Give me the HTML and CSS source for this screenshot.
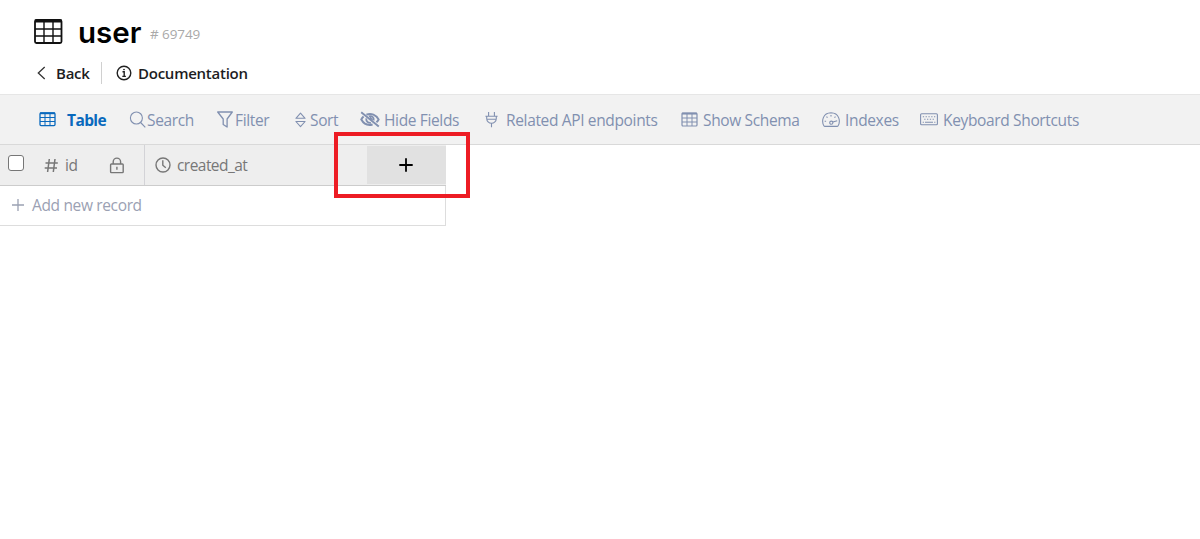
FILE: index.html
```html
<!DOCTYPE html>
<html lang="en">
<head>
    <meta charset="UTF-8">
    <meta name="viewport" content="width=device-width, initial-scale=1.0">
    <title>user</title>
    <link rel="stylesheet" href="styles.css">
</head>
<body>

    <header class="header">
        <div class="title-row">
            <svg class="title-icon" width="30" height="27" viewBox="0 0 30 27" fill="none" stroke="#111">
                <rect x="2" y="2" width="26.5" height="23" rx="1.5" stroke-width="1.8"/>
                <path d="M2 3h26.5" stroke-width="3"/>
                <path d="M2 11h26M2 18h26M11 4v21M20 4v21" stroke-width="1.4"/>
            </svg>
            <h1>user</h1>
            <span class="table-id"># 69749</span>
        </div>
        <nav class="links">
            <a href="#" class="back">
                <svg width="10" height="14" viewBox="0 0 10 14" fill="none" stroke="#333" stroke-width="1.3"><path d="M8.7 1L2.3 7l6.4 6"/></svg>
                <span>Back</span>
            </a>
            <a href="#" class="docs">
                <svg width="16" height="16" viewBox="0 0 16 16" fill="none" stroke="#222" stroke-width="1.4">
                    <circle cx="8" cy="8" r="6.8"/>
                    <path d="M6.5 6.8h1.7v4.6M6.3 11.4h3.6"/>
                    <circle cx="8" cy="4.6" r=".5" fill="#222" stroke-width=".8"/>
                </svg>
                <span>Documentation</span>
            </a>
        </nav>
    </header>

    <div class="toolbar">
        <button class="tool tool-table active">
            <svg width="17" height="15" viewBox="0 0 17 15" fill="none" stroke="currentColor">
                <rect x="1" y="1" width="15" height="12.6" rx="1" stroke-width="1.3"/>
                <path d="M1 1.3h15" stroke-width="1.8"/>
                <path d="M1 5.5h15M1 9.5h15M6 2v12M11 2v12"/>
            </svg>
            <span>Table</span>
        </button>
        <button class="tool tool-search">
            <svg width="17" height="17" viewBox="0 0 17 17" fill="none" stroke="currentColor" stroke-width="1.1"><circle cx="7.4" cy="7" r="6"/><path d="M11.6 11.5l4.7 4.9"/></svg>
            <span>Search</span>
        </button>
        <button class="tool tool-filter">
            <svg width="17" height="17" viewBox="0 0 17 17" fill="none" stroke="currentColor" stroke-width="1.3" stroke-linejoin="round"><path d="M.7 1h14.6l-5.2 7v8L6.2 13.5V8z"/></svg>
            <span>Filter</span>
        </button>
        <button class="tool tool-sort">
            <svg width="11" height="16" viewBox="0 0 11 16" fill="none" stroke="currentColor" stroke-width="1.1" stroke-linejoin="round"><path d="M5.5 1.2l4.6 5.1H.9zM.9 9.5h9.2l-4.6 5.1z"/></svg>
            <span>Sort</span>
        </button>
        <button class="tool tool-hide">
            <svg width="20" height="17" viewBox="0 0 20 17" fill="none" stroke="currentColor">
                <path d="M1.2 1.2l17.6 14.4" stroke-width="1.9"/>
                <path d="M6.4 3.6C11.2 1.7 16.2 3.8 18.6 8.4c-.6 1.1-1.3 2-2.2 2.8M3.6 5.6C2.7 6.4 1.9 7.3 1.3 8.5 3.8 13 8.2 14.7 12.6 13.5" stroke-width="2"/>
                <path d="M8.8 5.4c2.8-1.2 5.7 1.1 4.9 4.1M6.2 7.4c-.2 2.8 1.8 4.8 4.7 4.4" stroke-width="1.8"/>
                <path d="M10.6 5.8v1.8l2.2 1" stroke-width="1.6"/>
            </svg>
            <span>Hide Fields</span>
        </button>
        <button class="tool tool-api">
            <svg width="13" height="17" viewBox="0 0 13 17" fill="none" stroke="currentColor" stroke-width="1.1"><path d="M3.6 1v4M9.4 1v4M.4 5.3h12.2M1.7 5.5v2a4.8 4.8 0 0 0 9.6 0v-2M2 8.2h9M6.5 12.3v4"/></svg>
            <span>Related API endpoints</span>
        </button>
        <button class="tool tool-schema">
            <svg width="17" height="15" viewBox="0 0 17 15" fill="none" stroke="currentColor">
                <rect x="1" y="1" width="15" height="13" rx="1" stroke-width="1.2"/>
                <path d="M1 1.6h15" stroke-width="1.9"/>
                <path d="M1 6h15M1 10h15M6 2v12M11 2v12"/>
            </svg>
            <span>Show Schema</span>
        </button>
        <button class="tool tool-indexes">
            <svg width="18" height="15" viewBox="0 0 18 15" fill="none" stroke="currentColor" stroke-width="1.1">
                <path d="M2 14C-.9 9 .9 1 9 .8 17.1 1 18.9 9 16 14q-.3.4-.8.4H2.8Q2.3 14.4 2 14z"/>
                <circle cx="9.3" cy="10.7" r="1.6"/>
                <path d="M10.8 10.1l4.4-1.4M9 3v1.6M4.5 4.7l1 1M13.5 4.7l-1 1M2.6 9.2h1.5"/>
            </svg>
            <span>Indexes</span>
        </button>
        <button class="tool tool-keys">
            <svg width="18" height="13" viewBox="0 0 18 13" fill="none" stroke="currentColor" stroke-width="1.1">
                <rect x=".6" y=".8" width="16.8" height="11" rx="1"/>
                <path d="M2.8 3.7h12.6" stroke-dasharray="1.3 1.5"/>
                <path d="M4.2 6.3h10.6" stroke-dasharray="1.3 1.5"/>
                <path d="M2.7 9.2h1.2M5 9.2h8M14.2 9.2h1.2"/>
            </svg>
            <span>Keyboard Shortcuts</span>
        </button>
    </div>

    <main class="grid">
        <div class="grid-head">
            <div class="cell cell-id">
                <span class="checkbox"></span>
                <svg class="hash" width="15" height="15" viewBox="0 0 15 15" fill="none" stroke="currentColor" stroke-width="1.5"><path d="M5.3 1L3.6 14M11 1L9.3 14M1.5 5h12.3M.7 10h12.3"/></svg>
                <span class="name-id">id</span>
                <svg class="lock" width="16" height="17" viewBox="0 0 16 17" fill="none" stroke="currentColor" stroke-width="1.4"><rect x="1.6" y="7" width="12.6" height="8.6" rx=".8"/><path d="M4.2 7V4.8a3.7 3.7 0 0 1 7.4 0V7M7.9 9.8v3"/></svg>
            </div>
            <div class="cell cell-created">
                <svg width="16" height="16" viewBox="0 0 16 16" fill="none" stroke="currentColor" stroke-width="1.4"><circle cx="8" cy="8" r="7"/><path d="M7.8 3.2v5l3 2.6"/></svg>
                <span>created_at</span>
            </div>
            <div class="cell cell-add">
                <svg width="14" height="14" viewBox="0 0 14 14" stroke="#000" stroke-width="1.8"><path d="M7 .3v13.4M.3 7h13.4"/></svg>
                <div class="highlight"></div>
            </div>
        </div>
        <div class="add-record">
            <svg width="12" height="12" viewBox="0 0 12 12" stroke="currentColor" stroke-width="1.3"><path d="M6 0v12M0 6h12"/></svg>
            <span>Add new record</span>
        </div>
    </main>

</body>
</html>
```

FILE: styles.css
```css
* {
    box-sizing: border-box;
}

body {
    margin: 0;
    font-family: "Segoe UI", "Open Sans", sans-serif;
    font-size: 15.5px;
    letter-spacing: -0.35px;
    background-color: #fff;
    white-space: nowrap;
}

svg {
    display: block;
    flex: none;
}

.header {
    height: 94px;
    padding: 13px 0 0 33px;
}

.title-row {
    display: flex;
    align-items: center;
    height: 37px;
}

h1 {
    margin: 1px 0 0 15px;
    width: 72px;
    font-family: Inter, sans-serif;
    font-size: 29.5px;
    font-weight: 600;
    line-height: 37px;
    letter-spacing: 0;
    color: #000;
}

.table-id {
    margin-top: 4px;
    font-size: 13.5px;
    letter-spacing: -0.1px;
    color: #a9a9a9;
}

.links {
    display: flex;
    align-items: center;
    height: 22px;
    margin-top: 12px;
}

.links a {
    display: flex;
    align-items: center;
    height: 22px;
    font-weight: 600;
    font-size: 15px;
    letter-spacing: -0.25px;
    color: #1d1d1f;
    text-decoration: none;
}

.links span {
    margin-top: -1px;
}

.back {
    width: 69px;
    padding-left: 3px;
    gap: 10px;
    border-right: 1px solid #d0d0d0;
}

.docs {
    padding-left: 14px;
    gap: 6px;
}

.toolbar {
    display: flex;
    align-items: center;
    height: 51px;
    padding-left: 28px;
    background-color: #f2f2f2;
    border-top: 1px solid #e6e6e6;
    border-bottom: 1px solid #d9d9d9;
}

.tool {
    display: flex;
    align-items: center;
    flex: none;
    height: 34px;
    padding: 0;
    border: none;
    background: none;
    font: inherit;
    letter-spacing: inherit;
    color: #8190b0;
}

.tool-table {
    width: 101px;
    padding-left: 11px;
    gap: 11px;
}

.active {
    font-weight: 700;
    letter-spacing: -0.6px;
    color: #0969bd;
}

.tool-search {
    width: 88px;
    gap: 1px;
}

.tool-filter {
    width: 78px;
    gap: 1px;
}

.tool-sort {
    width: 65px;
    gap: 4px;
}

.tool-hide {
    width: 125px;
    gap: 4px;
}

.tool-api {
    width: 196px;
    gap: 8px;
}

.tool-schema {
    width: 141px;
    gap: 5px;
}

.tool-indexes {
    width: 98px;
    gap: 5px;
}

.tool-keys {
    gap: 5px;
}

.grid {
    width: 446px;
}

.grid-head {
    display: flex;
    height: 41px;
    padding-left: 1px;
    border-bottom: 1px solid #ccc;
    background-color: #eee;
}

.cell {
    display: flex;
    align-items: center;
    color: #777;
}

.cell-id {
    width: 144px;
    padding-left: 7px;
    border-right: 1px solid #d3d3d7;
}

.checkbox {
    width: 16px;
    height: 16px;
    margin-bottom: 4px;
    border: 1px solid #767676;
    border-radius: 3px;
    background-color: #fff;
}

.hash {
    margin-left: 20px;
}

.name-id {
    width: 44px;
    margin-left: 6px;
}

.cell-created {
    width: 222px;
    padding-left: 10px;
    gap: 6px;
}

.cell-created span {
    letter-spacing: -0.55px;
}

.cell-add {
    position: relative;
    justify-content: center;
    width: 79px;
    padding-right: 2px;
    margin: 1px 0;
    background-color: #e1e1e1;
}

.highlight {
    position: absolute;
    top: -14px;
    left: -33px;
    width: 136px;
    height: 66px;
    border: 4px solid #ed1c24;
}

.add-record {
    display: flex;
    align-items: center;
    height: 40px;
    padding: 0 0 2px 12px;
    gap: 8px;
    border-right: 1px solid #ddd;
    border-bottom: 1px solid #ddd;
    color: #9ba1b3;
}
```
